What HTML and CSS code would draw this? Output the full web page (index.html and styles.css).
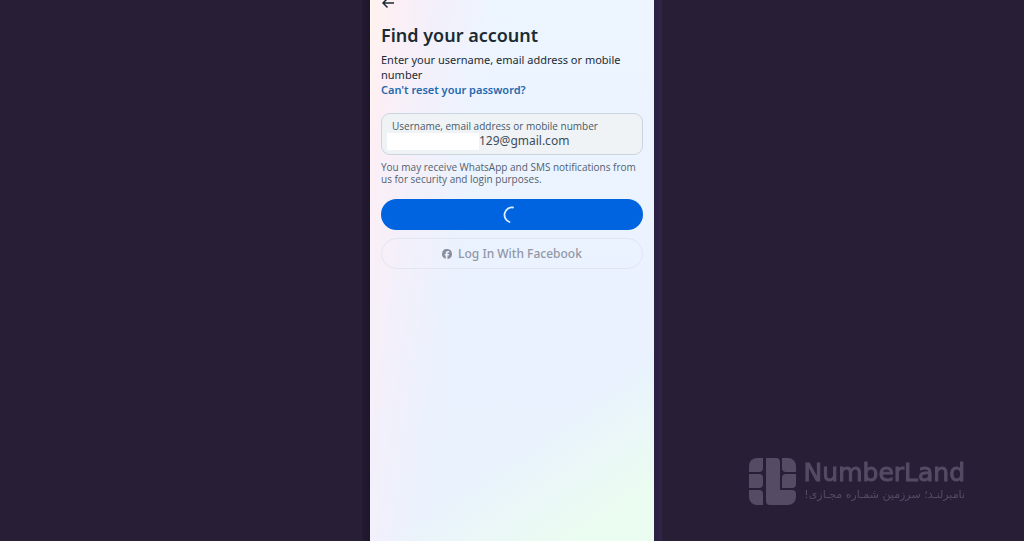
FILE: index.html
```html
<!DOCTYPE html>
<html lang="en">
<head>
  <meta charset="UTF-8">
  <title>Find your account</title>
  <meta name="viewport" content="width=device-width, initial-scale=1.0">
  <link rel="stylesheet" href="styles.css">
</head>
<body>

  <main class="phone">
    <form class="screen">
      <button type="button" class="back" aria-label="Back">
        <svg width="14" height="12" viewBox="0 0 14 12" fill="none" stroke="#1c2b33" stroke-width="1.5">
          <path d="M6.500 1.500 2 6l4.500 4.500M2 6H13"/>
        </svg>
      </button>

      <h1>Find your account</h1>
      <p class="intro">Enter your username, email address or mobile number</p>
      <a href="#" class="help">Can't reset your password?</a>

      <div class="field">
        <label for="account">Username, email address or mobile number</label>
        <div class="value">
          <span class="mask"></span>
          <input type="text" id="account" value="129@gmail.com">
        </div>
      </div>

      <p class="note">You may receive WhatsApp and SMS notifications from us for security and login purposes.</p>

      <button type="submit" class="button primary" aria-label="Continue">
        <svg width="18" height="18" viewBox="0 0 18 18" fill="none" stroke="#d9f0ff" stroke-width="1.8" stroke-linecap="round">
          <path d="M10 1.500A7.500 7.500 0 0 0 6.500 16"/>
        </svg>
      </button>

      <button type="button" class="button facebook">
        <svg width="10" height="10" viewBox="0 0 24 24">
          <path fill="#8a8f9f" d="M24 12a12 12 0 1 0-15 11.600v-8H6.600V12H9v-1.600c0-4 1.800-5.900 5.700-5.900.8 0 2 .1 2.600.3v3.400h-1.400c-1.900 0-2.700.7-2.700 2.600V12h3.800l-.7 3.700h-3.100v8.200A12 12 0 0 0 24 12z"/>
        </svg>
        Log In With Facebook
      </button>
    </form>
  </main>

  <div class="watermark">
    <svg width="47" height="47" viewBox="0 0 47 47" fill="#564b64">
      <path d="M8 0h6v10a4 4 0 0 1-4 4H0V8a8 8 0 0 1 8-8z"/>
      <path d="M0 16h10a4 4 0 0 1 4 4v6a4 4 0 0 1-4 4H0z"/>
      <path d="M0 32h10a4 4 0 0 1 4 4v11H8a8 8 0 0 1-8-8z"/>
      <path d="M17 0h10a4 4 0 0 1 4 4v28h12a4 4 0 0 1 4 4v3a8 8 0 0 1-8 8H21a4 4 0 0 1-4-4z"/>
      <path d="M33 0h6a8 8 0 0 1 8 8v6H37a4 4 0 0 1-4-4z"/>
      <path d="M37 16h10v10a4 4 0 0 1-4 4H33V20a4 4 0 0 1 4-4z"/>
    </svg>
    <div class="brand">
      <span class="name">NumberLand</span>
      <span class="slogan" lang="fa" dir="rtl">نامبرلنـد؛ سرزمین شمـاره مجـازی!</span>
    </div>
  </div>

</body>
</html>
```
FILE: styles.css
```css
* {
  box-sizing: border-box;
}
body {
  margin: 0;
  min-height: 100vh;
  display: flex;
  justify-content: center;
  background-color: #281f36;
  font-family: "Noto Sans", "Open Sans", sans-serif;
  color: #1c2b33;
}
/* phone body, seen as a thin dark edge on both sides */
.phone {
  display: flex;
  width: 300px;
  padding: 0 8px;
  background: linear-gradient(90deg, #231b30, #1d172a 8px, #2a2040 292px, #30244a);
}
.screen {
  flex: 1;
  min-width: 0;
  display: flex;
  flex-direction: column;
  padding: 0 11px;
  background:
    linear-gradient(145deg, transparent 74%, #ebfcf1 92%),
    linear-gradient(98deg, #fff3ee 0, #fbeff6 8%, #f2f0fb 20%, transparent 36%),
    linear-gradient(180deg, #edf6ff, #e9f2fe 55%, #eaf2fd);
}
.back {
  align-self: flex-start;
  height: 9px;
  padding: 0;
  border: 0;
  background: none;
  display: flex;
  align-items: flex-end;
}
h1 {
  margin: 14px 0 5px;
  font-size: 18px;
  line-height: 24px;
  font-weight: 600;
}
p {
  margin: 0;
}
.intro {
  font-size: 11px;
  line-height: 15px;
}
.help {
  font-size: 11px;
  line-height: 15px;
  font-weight: 600;
  color: #1f69ae;
  text-decoration: none;
}
.field {
  margin-top: 16px;
  padding: 6px 5px 4px;
  border: 1px solid #c9d5df;
  border-radius: 9px;
  background-color: #f0f3f6;
}
.field label {
  display: block;
  padding-left: 5px;
  font-family: "Open Sans", sans-serif;
  font-size: 10px;
  line-height: 13px;
  color: #465a69;
}
.value {
  display: flex;
}
.mask {
  flex: none;
  width: 92px;
  height: 17px;
  background-color: #fff;
}
.value input {
  flex: 1;
  min-width: 0;
  height: 15px;
  padding: 0;
  border: 0;
  background: none;
  font-family: inherit;
  font-size: 12px;
  color: #3b4c5a;
}
.note {
  margin-top: 6px;
  font-family: "Open Sans", sans-serif;
  font-size: 10px;
  line-height: 12px;
  color: #52616e;
}
.button {
  display: flex;
  align-items: center;
  justify-content: center;
  gap: 6px;
  height: 31px;
  border-radius: 16px;
  font-family: inherit;
  font-size: 12px;
}
.primary {
  margin-top: 14px;
  border: 0;
  background-color: #0064e0;
}
.facebook {
  margin-top: 8px;
  border: 1px solid #e1e6f1;
  background: none;
  font-weight: 500;
  color: #9297a5;
}
.watermark {
  position: fixed;
  right: 59px;
  bottom: 36px;
  display: flex;
  gap: 8px;
  color: #564b64;
}
.brand {
  display: flex;
  flex-direction: column;
}
.name {
  font-family: "DejaVu Sans", sans-serif;
  font-size: 25px;
  line-height: 30px;
  -webkit-text-stroke: 1px #564b64;
}
.slogan {
  font-family: "DejaVu Sans", sans-serif;
  font-size: 11px;
  line-height: 14px;
}
```
